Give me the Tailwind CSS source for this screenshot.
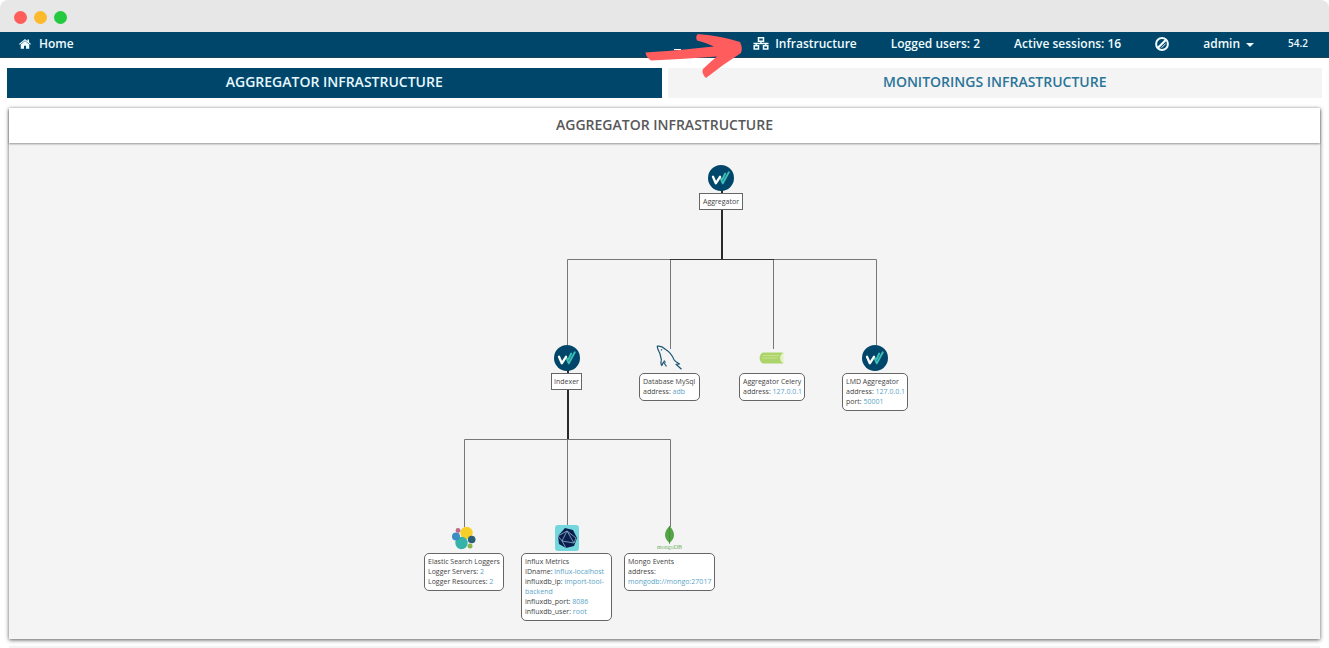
<!DOCTYPE html>
<html lang="en">
<head>
<meta charset="utf-8">
<title>Aggregator Infrastructure</title>
<script src="https://cdn.jsdelivr.net/npm/@tailwindcss/browser@4"></script>
</head>
<body class="bg-white font-['Open_Sans','Noto_Sans',sans-serif] overflow-hidden">
<svg class="hidden">
  <symbol id="brand" viewBox="0 0 26 26">
    <circle cx="13" cy="13" r="13" fill="#00466a"/>
    <path d="M12.300 12.500L14.800 18.300L20.800 7.300M17.200 8.500l-2.600 5.500" fill="none" stroke="#3dbdb5" stroke-width="1.900" stroke-linecap="round" stroke-linejoin="round"/>
    <path d="M5 11.800L7.800 18.300L12 11.800" fill="none" stroke="#fff" stroke-width="2.300" stroke-linecap="round" stroke-linejoin="round"/>
  </symbol>
</svg>
<div class="min-h-screen rounded-lg overflow-hidden relative">
  <div class="h-8 bg-[#e7e7e7] flex items-center gap-[7px] px-[14px] pt-0.5">
    <span class="size-[13px] rounded-full bg-[#ff5c5c]"></span>
    <span class="size-[13px] rounded-full bg-[#fdb92c]"></span>
    <span class="size-[13px] rounded-full bg-[#24c93f]"></span>
  </div>
  <nav class="h-[26px] bg-[#00466a] border-b border-[#1c4258] text-[#effcff] flex items-center justify-between pl-[19px] pr-[21px] pb-0.5 text-[12px] font-semibold">
    <a href="#" class="flex items-center gap-2">
      <svg class="w-3 h-[10px]" viewBox="0 0 24 20" fill="currentColor"><path d="M12 4L3.500 11v8.500h6.500v-6h4v6h6.500V11zM12 0L0 10l1.300 1.600L12 2.800l10.700 8.800L24 10l-4-3.400V1h-3v3.200z"/></svg>Home</a>
    <div class="flex items-center gap-[34px]">
      <a href="#" class="flex items-center gap-1.5">
        <svg class="w-4 h-[13px]" viewBox="0 0 16 13" fill="none" stroke="currentColor" stroke-width="1.500"><path d="M5.500.800h5v3.400h-5zM1.200 8.800h4.300v3.200H1.200zM10.500 8.800h4.300v3.200h-4.300zM8 4.300v2.300M3.300 9V6.500h9.400V9M.500 6.500h15"/></svg>Infrastructure</a>
      <span>Logged users: 2</span>
      <span>Active sessions: 16</span>
      <button aria-label="Disable refresh"><svg class="size-[14px] block" viewBox="0 0 14 14" fill="none" stroke="currentColor" stroke-width="2"><circle cx="7" cy="7" r="5.900"/><path d="M3 10.800l7.800-7.800" stroke-width="2.200"/><path d="M6.500 10.800L10.800 6.500" stroke-width="1"/></svg></button>
      <button class="flex items-center gap-1.5">admin<svg class="w-2 h-1 mt-0.5" viewBox="0 0 8 4" fill="currentColor"><path d="M0 0h8L4 4z"/></svg></button>
      <span class="text-[10px]">54.2</span>
    </div>
  </nav>
  <div class="grid grid-cols-2 gap-1.5 px-[7px] pt-[10px] text-[14px] font-semibold text-center">
    <button class="h-[30px] bg-[#00466a] text-[#e6f8ff] pb-1">AGGREGATOR INFRASTRUCTURE</button>
    <button class="h-[30px] bg-[#f4f4f4] text-[#2b7599] pb-1">MONITORINGS INFRASTRUCTURE</button>
  </div>
  <section class="mx-[9px] mt-[10px] bg-[#f4f4f4] shadow-[0_1px_4px_rgba(0,0,0,0.65)]">
    <h1 class="h-[35px] bg-white shadow-[0_1px_2px_rgba(0,0,0,0.4)] flex items-center justify-center pb-0.5 text-[14px] font-semibold text-[#58585a]">AGGREGATOR INFRASTRUCTURE</h1>
    <div class="flex justify-center">
      <div class="relative w-[601px] h-[496px] shrink-0 text-[7px] leading-[10px] text-[#444]">
        <svg class="absolute inset-0 size-full" viewBox="364 143 601 496" fill="none" stroke="#777" stroke-width="1">
          <path d="M567.500 345V259.500H876.500V345M670.500 259.500V349M773.500 259.500V349M464.500 527V439.500H670.500V527M567.500 439.500V526"/>
          <path d="M670 259.500h104" stroke="#333"/>
          <path d="M722 190v69M568 370v69" stroke="#2a2a2a" stroke-width="2"/>
        </svg>

        <svg class="absolute left-[344px] top-[22px] size-[26px]"><use href="#brand"/></svg>
        <div class="absolute left-[335px] top-[50px] w-11 h-[17px] border border-[#666] bg-white flex items-center justify-center">Aggregator</div>

        <svg class="absolute left-[190px] top-[202px] size-[26px]"><use href="#brand"/></svg>
        <div class="absolute left-[187px] top-[230px] w-[31px] h-[17px] border border-[#666] bg-white flex items-center justify-center">Indexer</div>

        <svg class="absolute left-[292px] top-[202px] w-[27px] h-[26px]" viewBox="0 0 27 26" fill="none" stroke="#1d5575" stroke-width="1.200" stroke-linejoin="round"><path d="M5.500 15c-1-3-1-5-1.800-7C2.500 5.500 1 3 1.300 1.200 4 .700 7 2 9 4c4 2.500 7.500 6.500 9.200 11 1 1.500 3.500 2.500 5.300 4l-3.500.3 5.500 5M5.500 15c-.8 2-.7 4 .3 5.500l1.700-3.500 3 4.500M9.500 17.500l-1.500-2"/><path d="M5 4.500l1 .8"/></svg>
        <div class="absolute left-[275px] top-[230px] w-[61px] border border-[#666] rounded-[5px] bg-white px-[3px] py-[3px] whitespace-nowrap">Database MySql<br>address: <span class="text-[#5ba4c7]">adb</span></div>

        <svg class="absolute left-[395px] top-[209px] w-[27px] h-3" viewBox="0 0 27 12"><path d="M4 .500h20v11H4C-.500 10 -.500 2 4 .500z" fill="#add36b"/><path d="M4 3.500h16M3 6h16" stroke="#c5e38d" stroke-width="1.200"/><path d="M25.500.500c-6 1-6 10 0 11l-1.500-3.500 1-2-1-2z" fill="#e3f1c4"/></svg>
        <div class="absolute left-[375px] top-[230px] w-[66px] border border-[#666] rounded-[5px] bg-white px-[3px] py-[3px] whitespace-nowrap">Aggregator Celery<br>address: <span class="text-[#5ba4c7]">127.0.0.1</span></div>

        <svg class="absolute left-[498px] top-[202px] size-[26px]"><use href="#brand"/></svg>
        <div class="absolute left-[478px] top-[230px] w-[66px] border border-[#666] rounded-[5px] bg-white px-[3px] py-[3px] whitespace-nowrap">LMD Aggregator<br>address: <span class="text-[#5ba4c7]">127.0.0.1</span><br>port: <span class="text-[#5ba4c7]">50001</span></div>

        <svg class="absolute left-[88px] top-[383px] w-6 h-6" viewBox="0 0 24 24"><circle cx="14.500" cy="7" r="6.200" fill="#f6cf2a"/><circle cx="9.500" cy="17" r="6.200" fill="#35b3a8"/><circle cx="4" cy="10.500" r="4" fill="#3c8fc2"/><circle cx="6" cy="4.500" r="2.400" fill="#bd6a8b"/><circle cx="19.700" cy="13.500" r="3.800" fill="#2b5f78"/><circle cx="18" cy="20" r="2.500" fill="#8cb64c"/></svg>
        <div class="absolute left-[60px] top-[410px] w-20 border border-[#666] rounded-[5px] bg-white px-[3px] py-[3px] whitespace-nowrap">Elastic Search Loggers<br>Logger Servers: <span class="text-[#5ba4c7]">2</span><br>Logger Resources: <span class="text-[#5ba4c7]">2</span></div>

        <svg class="absolute left-[191px] top-[382px] w-6 h-[26px]" viewBox="0 0 24 26"><rect width="24" height="26" rx="3" fill="#74d7de"/><path d="M10 3l8 2 4 8-3 8-8 2-7-4-1-8z" fill="#0b1d4c"/><path d="M12 6L7 16l12 2zM7 16l-4-5 9-5M7 16l4 7M19 18l2-5-9-7" fill="none" stroke="#8cb9cf" stroke-width=".8"/></svg>
        <div class="absolute left-[157px] top-[410px] w-[91px] border border-[#666] rounded-[5px] bg-white px-[3px] py-[3px]">Influx Metrics<br>IDname: <span class="text-[#5ba4c7]">influx-localhost</span><br>influxdb_ip: <span class="text-[#5ba4c7]">import-tool-<br>backend</span><br>influxdb_port: <span class="text-[#5ba4c7]">8086</span><br>influxdb_user: <span class="text-[#5ba4c7]">root</span></div>

        <svg class="absolute left-[292px] top-[383px] w-[27px] h-6" viewBox="0 0 27 24"><path d="M13.500 0c6 6 6 12 0 17-6-5-6-11 0-17z" fill="#55a548"/><path d="M13.500 0v18" stroke="#438a3a" stroke-width=".7"/><text x="13.500" y="22.500" text-anchor="middle" font-size="6" fill="#72b267" font-family="Liberation Serif, serif">mongoDB</text></svg>
        <div class="absolute left-[260px] top-[410px] w-[91px] border border-[#666] rounded-[5px] bg-white px-[3px] py-[3px] whitespace-nowrap">Mongo Events<br>address:<br><span class="text-[#5ba4c7]">mongodb://mongo:27017</span></div>
      </div>
    </div>
  </section>
  <div class="mx-[9px] mt-[7px] h-0.5 bg-[#f3f3f3]"></div>
  <svg class="absolute left-[644px] top-[33px] w-[100px] h-[46px]" viewBox="644 33 100 46"><path d="M674 49.500h7" stroke="#fff" stroke-width="1"/><path d="M645.500 52.500Q672 51 714 46.500Q704 42 697 40.500Q695 36 698 34Q722 36 740 42Q743 48 741 53Q722 65 706 78Q701 73 703 69Q710 62 717 56.500Q684 59 651 60.500Q646 57 645.500 52.500z" fill="#ff5c5e"/></svg>
</div>
</body>
</html>
